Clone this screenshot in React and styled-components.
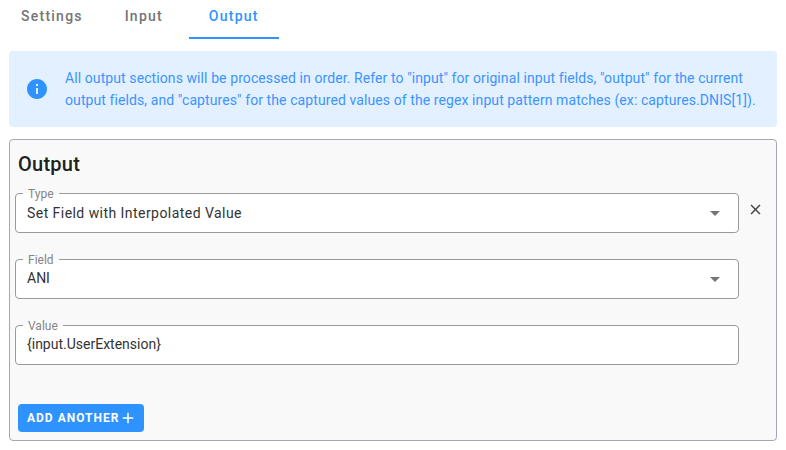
import styled, { createGlobalStyle } from "styled-components"

const GlobalStyle = createGlobalStyle`
  body {
    margin: 0;
    background: #fff;
    font-family: Roboto, "Liberation Sans", sans-serif;
  }
`

const Page = styled.div`
  width: 786px;
  height: 450px;
  padding: 0 9px;
  box-sizing: border-box;
  overflow: hidden;
`

const Tabs = styled.div`
  display: flex;
  height: 39px;
  margin-left: -4px;
`

const Tab = styled.div`
  min-width: 90px;
  padding: 7px 16px 0;
  box-sizing: border-box;
  height: 39px;
  text-align: center;
  font-size: 14px;
  line-height: 18px;
  font-weight: 500;
  letter-spacing: 1.25px;
  color: ${({ $active }) => ($active ? "#2e93ff" : "#757575")};
  border-bottom: 2px solid ${({ $active }) => ($active ? "#2e93ff" : "transparent")};
`

const Alert = styled.div`
  display: flex;
  align-items: center;
  gap: 16px;
  height: 76px;
  margin-top: 12px;
  padding: 0 16px;
  box-sizing: border-box;
  border-radius: 4px;
  background: #e3f0ff;
  color: #3d94ff;
  font-size: 14px;
  line-height: 22px;
  letter-spacing: 0.09px;
`

const AlertIcon = styled.svg`
  width: 24px;
  height: 24px;
  flex: none;
  fill: #2e93ff;
`

const Panel = styled.section`
  height: 302px;
  margin-top: 12px;
  padding: 11px 8px 8px 5px;
  box-sizing: border-box;
  display: flex;
  flex-direction: column;
  border: 1px solid #a8a6b4;
  border-radius: 4px;
  background: #f9f9f9;
`

const Heading = styled.h2`
  margin: 0 0 10px 3px;
  font-size: 20px;
  line-height: 26px;
  font-weight: 500;
  letter-spacing: 0.25px;
  color: #212121;
`

const Fields = styled.div`
  display: flex;
  flex-direction: column;
  gap: 20px;
`

const Row = styled.div`
  display: flex;
  align-items: flex-start;
`

const Field = styled.fieldset`
  width: 724px;
  height: 46px;
  margin: 0;
  padding: 0 11px;
  box-sizing: border-box;
  flex: none;
  border: 1px solid #9a9a9a;
  border-radius: 4px;
  background: #fff;
`

const Legend = styled.legend`
  height: 12px;
  margin-left: -4px;
  padding: 0 5px;
  font-size: 12px;
  line-height: 14px;
  color: #858585;
`

const FieldBody = styled.div`
  display: flex;
  align-items: center;
  justify-content: space-between;
  height: 20px;
  margin-top: 3px;
`

const FieldValue = styled.span`
  margin-top: ${({ $nudge }) => ($nudge ? "2px" : "0")};
  font-size: 14px;
  line-height: 20px;
  letter-spacing: ${({ $spacing }) => $spacing || "0"};
  color: #333;
`

const Arrow = styled.svg`
  width: 24px;
  height: 24px;
  margin-top: 2px;
  flex: none;
  fill: #757575;
`

const RemoveIcon = styled.svg`
  width: 17px;
  height: 17px;
  margin: 14px 0 0 8px;
  fill: #424242;
`

const AddButton = styled.button`
  align-self: flex-start;
  display: flex;
  align-items: center;
  height: 28px;
  margin: auto 0 0 3px;
  padding: 0 7px 0 9px;
  border: 0;
  border-radius: 4px;
  background: #2e93ff;
  color: #fff;
  font-family: inherit;
  font-size: 12px;
  font-weight: 700;
  letter-spacing: 1px;
  text-transform: uppercase;
`

const PlusIcon = styled.svg`
  width: 18px;
  height: 18px;
  fill: #fff;
`

function SelectArrow() {
  return (
    <Arrow viewBox="0 0 24 24">
      <path d="M7 10l5 5 5-5z" />
    </Arrow>
  )
}

export default function App() {
  return (
    <Page>
      <GlobalStyle />
      <Tabs>
        <Tab>Settings</Tab>
        <Tab>Input</Tab>
        <Tab $active>Output</Tab>
      </Tabs>
      <Alert>
        <AlertIcon viewBox="0 0 24 24">
          <path d="M12 2C6.48 2 2 6.48 2 12s4.48 10 10 10 10-4.48 10-10S17.52 2 12 2zm1 15h-2v-6h2v6zm0-8h-2V7h2v2z" />
        </AlertIcon>
        <div>
          All output sections will be processed in order. Refer to "input" for original input fields, "output" for the current
          output fields, and "captures" for the captured values of the regex input pattern matches (ex: captures.DNIS[1]).
        </div>
      </Alert>
      <Panel>
        <Heading>Output</Heading>
        <Fields>
          <Row>
            <Field>
              <Legend>Type</Legend>
              <FieldBody>
                <FieldValue $spacing="0.45px" $nudge>Set Field with Interpolated Value</FieldValue>
                <SelectArrow />
              </FieldBody>
            </Field>
            <RemoveIcon viewBox="0 0 24 24">
              <path d="M19 6.41L17.59 5 12 10.59 6.41 5 5 6.41 10.59 12 5 17.59 6.41 19 12 13.41 17.59 19 19 17.59 13.41 12z" />
            </RemoveIcon>
          </Row>
          <Row>
            <Field>
              <Legend>Field</Legend>
              <FieldBody>
                <FieldValue>ANI</FieldValue>
                <SelectArrow />
              </FieldBody>
            </Field>
          </Row>
          <Row>
            <Field>
              <Legend>Value</Legend>
              <FieldBody>
                <FieldValue>{"{input.UserExtension}"}</FieldValue>
              </FieldBody>
            </Field>
          </Row>
        </Fields>
        <AddButton>
          Add another
          <PlusIcon viewBox="0 0 24 24">
            <path d="M19 13h-6v6h-2v-6H5v-2h6V5h2v6h6v2z" />
          </PlusIcon>
        </AddButton>
      </Panel>
    </Page>
  )
}
